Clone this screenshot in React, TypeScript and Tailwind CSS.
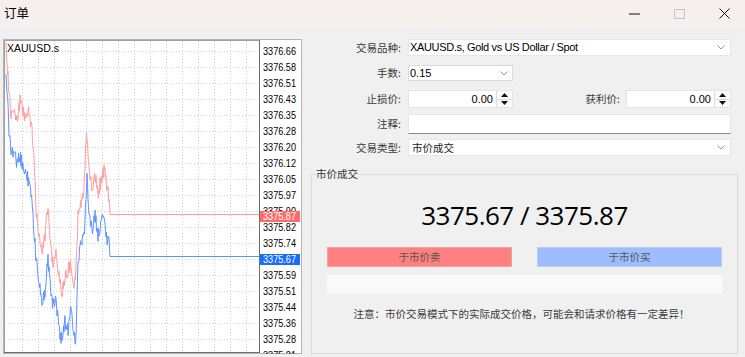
import React from 'react';

function rng(seed: number) {
  let s = seed;
  return () => {
    s = (s * 1664525 + 1013904223) % 4294967296;
    return s / 4294967296;
  };
}

function buildSeries(anchors: [number, number][], seed: number, amp: number, endY: number) {
  const r = rng(seed);
  const pts: string[] = [];
  let i = 0;
  const last = anchors[anchors.length - 1][0];
  for (let x = anchors[0][0]; x < last; x += 0.5) {
    while (i < anchors.length - 2 && x > anchors[i + 1][0]) i++;
    const [x0, y0] = anchors[i];
    const [x1, y1] = anchors[i + 1];
    const t = (x - x0) / (x1 - x0);
    const y = y0 + (y1 - y0) * t + (r() - 0.5) * 2 * amp;
    pts.push(`${x.toFixed(1)},${y.toFixed(1)}`);
  }
  pts.push(`${last},${endY}`);
  pts.push(`259,${endY}`);
  return pts.join(' ');
}

const redAnchors: [number, number][] = [
  [6, 46], [7, 60], [9, 95], [11, 112], [14, 108], [17, 122], [20, 100], [23, 112], [26, 118], [29, 110],
  [32, 130], [34, 160], [36, 210], [39, 235], [42, 250], [45, 235], [48, 205], [50, 240], [53, 265],
  [56, 255], [59, 275], [62, 295], [65, 275], [68, 270], [71, 262], [74, 295], [76, 270], [78, 215],
  [81, 205], [84, 190], [86, 140], [87, 135], [89, 170], [92, 190], [95, 175], [98, 195], [101, 180],
  [104, 170], [107, 185], [109, 200], [110, 214.5],
];
const blueAnchors: [number, number][] = [
  [6, 78], [7, 90], [9, 130], [11, 152], [14, 150], [17, 165], [20, 155], [23, 168], [26, 170], [29, 185],
  [32, 200], [34, 230], [36, 260], [39, 280], [42, 300], [45, 290], [48, 260], [50, 285], [53, 305],
  [56, 300], [59, 330], [62, 340], [65, 320], [68, 330], [71, 310], [74, 335], [76, 340], [77, 300],
  [78, 258], [81, 245], [84, 238], [86, 200], [87, 178], [89, 210], [92, 230], [95, 215], [98, 235],
  [101, 225], [104, 215], [107, 240], [109, 240], [110, 256.5],
];

const labels = [
  '3376.66', '3376.58', '3376.51', '3376.43', '3376.35', '3376.28', '3376.20', '3376.12', '3376.05', '3375.97',
  '3375.90', '3375.82', '3375.74', '3375.67', '3375.59', '3375.51', '3375.44', '3375.36', '3375.28', '3375.21',
];

function Chart() {
  const red = buildSeries(redAnchors, 7, 7, 214.5);
  const blue = buildSeries(blueAnchors, 13, 7, 256.5);
  const vx = Array.from({ length: 15 }, (_, k) => 22 + 16 * k);
  const hy = Array.from({ length: 19 }, (_, k) => 51 + 16 * k);
  return (
    <svg width="300" height="315" className="block shrink-0 ml-[3px] mt-[12px]">
      <g transform="translate(-3,-39)">
        <rect x="3.5" y="39.5" width="298" height="314" fill="#ffffff" stroke="#b4b4b4" />
        <g stroke="#d2d2d2" strokeDasharray="1 2">
          {vx.map((x) => (
            <line key={'v' + x} x1={x + 0.5} y1={41} x2={x + 0.5} y2={352} />
          ))}
          {hy.map((y) => (
            <line key={'h' + y} x1={5} y1={y + 0.5} x2={258} y2={y + 0.5} />
          ))}
        </g>
        <polyline points={red} fill="none" stroke="#ff9d9d" strokeWidth="1" />
        <polyline points={blue} fill="none" stroke="#5a93ff" strokeWidth="1" />
        <line x1="4" y1="40.5" x2="259" y2="40.5" stroke="#a0a0a0" />
        <line x1="4.5" y1="40" x2="4.5" y2="353" stroke="#a0a0a0" />
        <line x1="259.5" y1="40" x2="259.5" y2="353" stroke="#6e6e6e" />
        <line x1="4" y1="352.5" x2="260" y2="352.5" stroke="#6e6e6e" />
        <g fontFamily="Liberation Sans, Arial, sans-serif" fontSize="10" fill="#000">
          {labels.map((l, k) => (
            <text key={l} x={263} y={51 + 16 * k + 4} textLength={33} lengthAdjust="spacingAndGlyphs">
              {l}
            </text>
          ))}
        </g>
        <rect x="260" y="211" width="40" height="11" fill="#ff6a6a" />
        <text x={263} y={220} fontFamily="Liberation Sans, Arial, sans-serif" fontSize="10" fill="#fff" textLength={33} lengthAdjust="spacingAndGlyphs">
          3375.87
        </text>
        <rect x="260" y="254" width="40" height="11" fill="#1a6cff" />
        <text x={263} y={263} fontFamily="Liberation Sans, Arial, sans-serif" fontSize="10" fill="#fff" textLength={33} lengthAdjust="spacingAndGlyphs">
          3375.67
        </text>
        <text x={7} y={52} fontFamily="Liberation Sans, Arial, sans-serif" fontSize="10.5" fill="#000">
          XAUUSD.s
        </text>
      </g>
    </svg>
  );
}

function Chevron() {
  return (
    <svg width="8" height="5" viewBox="0 0 8 5" className="block">
      <polyline points="0.5,0.5 4,4 7.5,0.5" fill="none" stroke="#8a8a8a" strokeWidth="0.9" />
    </svg>
  );
}

function Spinner() {
  return (
    <div className="w-[16px] h-full flex flex-col border-l border-[#dcdcdc] bg-[#fbfbfb]">
      <div className="flex-1 flex items-center justify-center border-b border-[#dcdcdc]">
        <svg width="7" height="4" viewBox="0 0 7 4" className="block">
          <polygon points="0,4 3.5,0 7,4" fill="#111" />
        </svg>
      </div>
      <div className="flex-1 flex items-center justify-center">
        <svg width="7" height="4" viewBox="0 0 7 4" className="block">
          <polygon points="0,0 3.5,4 7,0" fill="#111" />
        </svg>
      </div>
    </div>
  );
}

const cjk = "font-['Noto_Sans_CJK_SC',sans-serif]";
const latin = "font-['Liberation_Sans','Noto_Sans_CJK_SC',sans-serif]";

export default function App() {
  return (
    <div className="w-[745px] h-[357px] bg-[#f0f0f0] overflow-hidden flex flex-col">
      <div className="h-[27px] shrink-0 bg-[#f7eeee] flex items-center">
        <span className={`ml-[4px] text-[12.5px] leading-none text-black ${cjk}`}>订单</span>
        <svg width="11" height="2" className="block ml-auto">
          <line x1="0" y1="1" x2="11" y2="1" stroke="#111" strokeWidth="1" />
        </svg>
        <svg width="11" height="10" className="block ml-[34px]">
          <rect x="0.5" y="0.5" width="10" height="9" fill="none" stroke="#c4c4c4" />
        </svg>
        <svg width="11" height="11" className="block ml-[34px] mr-[15px]">
          <line x1="0.5" y1="0.5" x2="10.5" y2="10.5" stroke="#111" strokeWidth="1" />
          <line x1="10.5" y1="0.5" x2="0.5" y2="10.5" stroke="#111" strokeWidth="1" />
        </svg>
      </div>
      <div className="flex flex-1">
        <Chart />
        <div className={`flex-1 flex flex-col text-[10.5px] text-[#3a3a3a] ${cjk}`}>
          <div className="flex items-center mt-[12px] h-[17px]">
            <div className="w-[98px] text-right">交易品种:</div>
            <div className="ml-[7px] w-[323px] h-full bg-white border border-[#e6e6e6] flex items-center pl-[1px] pr-[5px]">
              <span className={`text-[11px] tracking-[-0.35px] text-black ${latin}`}>XAUUSD.s, Gold vs US Dollar / Spot</span>
              <span className="ml-auto"><Chevron /></span>
            </div>
          </div>
          <div className="flex items-center mt-[9px] h-[16px]">
            <div className="w-[98px] text-right">手数:</div>
            <div className="ml-[7px] w-[105px] h-full bg-white border border-[#dcdcdc] flex items-center pl-[1px] pr-[4px]">
              <span className={`text-[11px] text-black ${latin}`}>0.15</span>
              <span className="ml-auto"><Chevron /></span>
            </div>
          </div>
          <div className="flex items-center mt-[9px] h-[18px]">
            <div className="w-[98px] text-right">止损价:</div>
            <div className="ml-[7px] w-[105px] h-full bg-white border border-[#e4e4e4] flex items-stretch">
              <div className={`flex-1 flex items-center justify-end pr-[3px] text-[11px] text-black ${latin}`}>0.00</div>
              <Spinner />
            </div>
            <div className="w-[107px] text-right">获利价:</div>
            <div className="ml-[6px] w-[105px] h-full bg-white border border-[#e4e4e4] flex items-stretch">
              <div className={`flex-1 flex items-center justify-end pr-[3px] text-[11px] text-black ${latin}`}>0.00</div>
              <Spinner />
            </div>
          </div>
          <div className="flex items-center mt-[6px] h-[20px]">
            <div className="w-[98px] text-right">注释:</div>
            <div className="ml-[7px] w-[323px] h-full bg-white border border-[#e6e6e6] border-b-[#8a8a8a]" />
          </div>
          <div className="flex items-center mt-[5px] h-[17px]">
            <div className="w-[98px] text-right">交易类型:</div>
            <div className="ml-[7px] w-[323px] h-full bg-white border border-[#e6e6e6] flex items-center pl-[3px] pr-[5px]">
              <span className="text-[#222]">市价成交</span>
              <span className="ml-auto"><Chevron /></span>
            </div>
          </div>
          <div className="relative ml-[8px] mt-[18px] w-[427px] h-[180px] border border-[#dcdcdc] flex flex-col">
            <span className="absolute -top-[8px] left-[4px] bg-[#f0f0f0] pr-[1px] leading-[14px] text-[#333]">市价成交</span>
            <div className={`mt-[24px] h-[32px] leading-[32px] text-center text-[26px] tracking-[-0.5px] text-black font-['Open_Sans',sans-serif]`}>
              3375.67 / 3375.87
            </div>
            <div className="mt-[16px] px-[15px] flex justify-between">
              <div className="w-[185px] h-[20px] bg-[#ff8080] border border-[#f4a0a0] flex items-center justify-center text-[#555]">于市价卖</div>
              <div className="w-[185px] h-[20px] bg-[#9dbdff] border border-[#b5cdf7] flex items-center justify-center text-[#555]">于市价买</div>
            </div>
            <div className="mt-[8px] mx-[15px] h-[19px] bg-[#f9f9f9]" />
            <div className="mt-[13px] text-center leading-[14px] text-[#3a3a3a] pr-[6px]">注意：市价交易模式下的实际成交价格，可能会和请求价格有一定差异！</div>
          </div>
        </div>
      </div>
    </div>
  );
}
